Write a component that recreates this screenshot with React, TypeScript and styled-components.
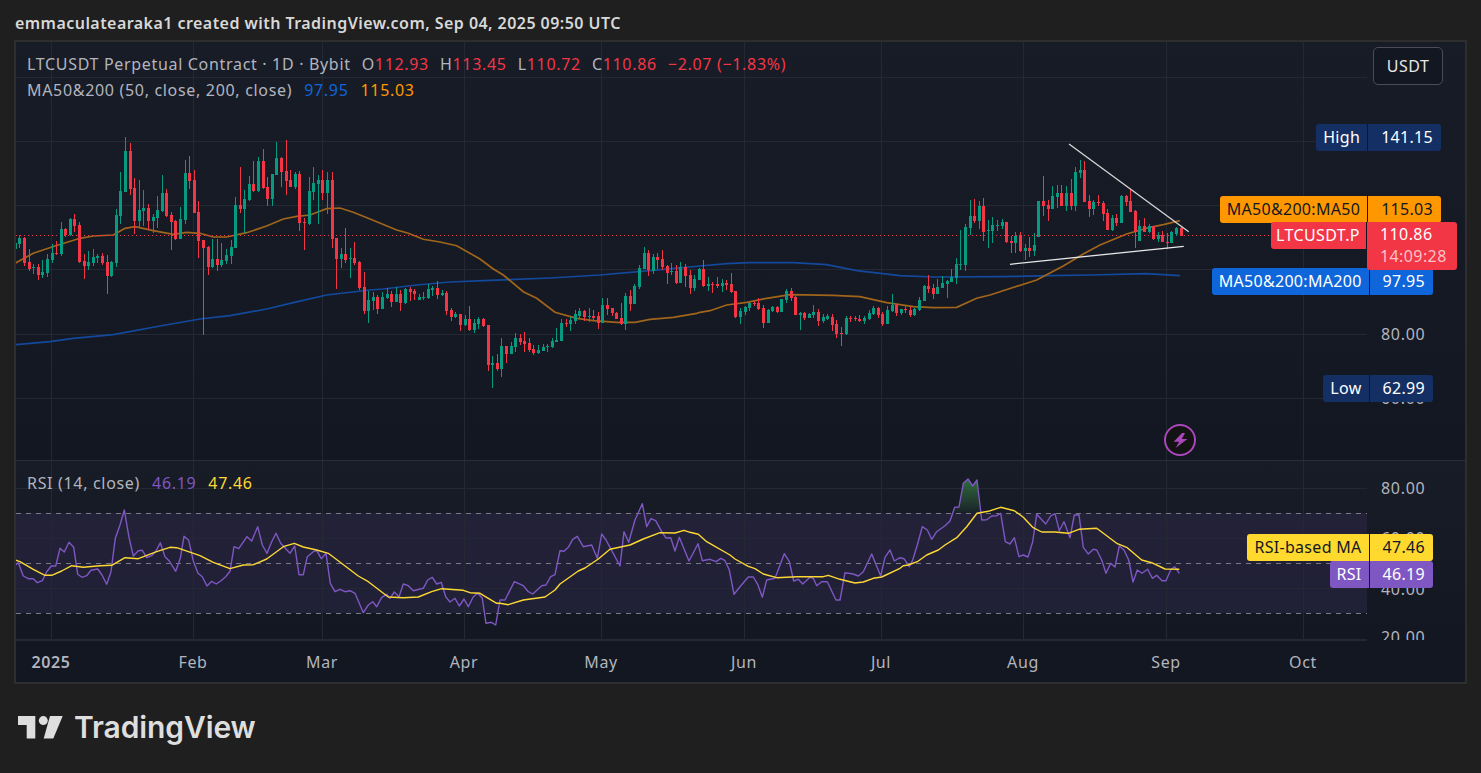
import React from 'react';
import styled, { createGlobalStyle } from 'styled-components';

const FONT = '"Noto Sans", "Open Sans", sans-serif';
const UP = '#089981';
const DOWN = '#f23645';
const GRID = '#242833';

const GlobalStyle = createGlobalStyle`
  html, body {
    margin: 0;
    background: #1f1f1f;
    font-family: ${FONT};
  }
`;

const Page = styled.div`
  width: 1481px;
  height: 773px;
  padding: 0 14px;
  box-sizing: border-box;
  overflow: hidden;
`;

const Title = styled.div`
  height: 40px;
  padding: 6px 0 0 1px;
  box-sizing: border-box;
  font-size: 16px;
  line-height: 34px;
  font-weight: 600;
  letter-spacing: 0.45px;
  color: #d8d8d8;
  white-space: nowrap;
`;

const Frame = styled.div`
  width: 1453px;
  height: 644px;
  box-sizing: border-box;
  border: 2px solid #2e2e2e;
  background: #131722;
  display: flex;
  flex-direction: column;
`;

const Pane = styled.div<{ $height: number }>`
  height: ${(p) => p.$height}px;
  display: flex;
  background: linear-gradient(#181c27, #131722);
  flex: none;
`;

const Separator = styled.div`
  height: 1px;
  background: #2a2e39;
  flex: none;
`;

const Plot = styled.div`
  position: relative;
  width: 1351px;
  height: 100%;
  flex: none;
  svg {
    display: block;
  }
`;

const Axis = styled.div`
  position: relative;
  flex: 1;
  height: 100%;
`;

const Legend = styled.div`
  position: absolute;
  left: 11px;
  top: 9px;
  display: flex;
  flex-direction: column;
  font-size: 16px;
  line-height: 26px;
  letter-spacing: 0.68px;
  color: #b2b5be;
  white-space: nowrap;
`;

const LegendRow = styled.div<{ $gap: number }>`
  display: flex;
  gap: ${(p) => p.$gap}px;
`;

const Ohlc = styled.span`
  color: ${DOWN};
  b {
    font-weight: 400;
    color: #b2b5be;
  }
`;

const LegendValue = styled.span<{ $color: string }>`
  color: ${(p) => p.$color};
`;

const CurrencyButton = styled.div`
  margin: 5px 0 0 6px;
  width: 70px;
  height: 38px;
  box-sizing: border-box;
  border: 1px solid #4a4d57;
  border-radius: 5px;
  background: #131722;
  color: #e6e6e6;
  font-size: 16px;
  letter-spacing: 0.5px;
  line-height: 36px;
  text-align: center;
`;

const Tick = styled.div<{ $y: number }>`
  position: absolute;
  left: 14px;
  top: ${(p) => p.$y}px;
  transform: translateY(-50%);
  font-size: 16px;
  letter-spacing: 0.7px;
  line-height: 20px;
  color: #b2b5be;
`;

const TickClip = styled.div`
  position: absolute;
  inset: 0;
  overflow: hidden;
`;

const Tag = styled.div<{ $top: number; $right: number; $bg: string; $fg: string }>`
  position: absolute;
  top: ${(p) => p.$top}px;
  right: ${(p) => p.$right}px;
  height: 27px;
  display: flex;
  font-size: 16px;
  letter-spacing: 0.3px;
  line-height: 26px;
  white-space: nowrap;
  color: ${(p) => p.$fg};
  background: ${(p) => p.$bg};
  border-radius: 3px;
  z-index: 1;
`;

const TagName = styled.div`
  padding: 0 7px;
  border-right: 1px solid #131722;
`;

const TagValue = styled.div`
  padding: 0 8px 0 13px;
`;

const PriceTag = styled.div`
  position: absolute;
  top: 180px;
  left: -96px;
  display: flex;
  align-items: flex-start;
  font-size: 16px;
  letter-spacing: 0.4px;
  line-height: 26px;
  color: #fff;
  white-space: nowrap;
  z-index: 2;
`;

const PriceName = styled.div`
  width: 96px;
  height: 27px;
  box-sizing: border-box;
  padding-left: 5px;
  background: ${DOWN};
  border-radius: 3px 0 0 3px;
  border-right: 1px solid #131722;
`;

const PriceValue = styled.div`
  width: 90px;
  height: 48px;
  box-sizing: border-box;
  padding-left: 13px;
  background: ${DOWN};
  border-radius: 0 3px 3px 3px;
  line-height: 24px;
  span {
    display: block;
    line-height: 21px;
    color: #fbc2c7;
  }
`;

const Badge = styled.div`
  position: absolute;
  left: 1148px;
  top: 382px;
  width: 32px;
  height: 32px;
  box-sizing: border-box;
  border: 2px solid #ab47bc;
  border-radius: 50%;
  background: #131313;
  display: flex;
  align-items: center;
  justify-content: center;
`;

const TimeAxis = styled.div`
  position: relative;
  flex: 1;
`;

const TimeLine = styled.div`
  width: 1351px;
  height: 1px;
  background: ${GRID};
`;

const TimeTick = styled.div<{ $x: number; $strong?: boolean }>`
  position: absolute;
  left: ${(p) => p.$x - 16}px;
  top: 12px;
  transform: translateX(-50%);
  font-size: 16px;
  letter-spacing: 0.6px;
  line-height: 20px;
  font-weight: ${(p) => (p.$strong ? 600 : 400)};
  color: #b2b5be;
`;

const Footer = styled.div`
  display: flex;
  align-items: center;
  gap: 11px;
  padding: 25px 0 0 4px;
  color: #dedede;
`;

const Wordmark = styled.div`
  font-family: Inter, ${FONT};
  font-size: 30px;
  line-height: 36px;
  font-weight: 600;
  letter-spacing: -0.1px;
`;

type Candle = number[];

// [up, high, bodyTop, bodyBottom, low]; the y values are 3x crop units, y0 is the crop's top
const SEG_A: Candle[] = [
  [1,370,370,386,386],[1,345,353,372,384],[0,350,354,428,437],[0,387,426,446,453],[1,432,441,444,462],[0,432,441,465,480],[1,420,456,465,473],[1,402,417,459,471],[1,372,399,420,430],[0,363,399,403,405],
  [1,306,327,402,408],[0,323,327,345,351],[1,294,297,345,348],[0,282,297,318,336],[0,306,315,426,429],[0,402,423,438,477],[1,393,426,438,450],[1,387,411,429,438],[1,402,408,414,429],[0,399,408,429,435],
  [0,405,426,468,522],[1,423,426,468,471],[1,267,285,429,441],[1,156,213,288,312],[1,51,93,216,216],[0,69,93,207,225],[0,174,204,303,342],[1,180,270,303,321],[1,210,264,273,318],[0,252,264,303,330],
  [1,282,291,303,339],[1,228,270,294,324],[1,165,219,273,276],[0,207,219,288,291],[0,276,285,306,390],[0,300,303,357,360],[1,261,297,357,357],[1,120,159,300,312],[0,108,159,183,207],[0,150,180,279,279],
  [0,243,276,363,414],[0,360,360,384,645],[0,378,381,441,465],[1,357,417,441,444],[0,357,417,435,453],[1,369,420,435,441],[1,387,405,423,432],[1,360,381,408,432],[1,231,255,384,384],[0,141,255,267,279],
  [1,210,237,267,339],[1,168,192,240,243],[0,123,192,213,216],[1,111,123,213,216],[0,87,123,204,207],[0,171,201,237,258],[1,162,162,237,258],[1,66,114,165,165],[0,111,114,156,201],[0,60,153,183,225],
  [0,150,180,201,201],[1,156,162,201,207],[0,153,162,309,333],[0,294,306,309,390],[1,171,213,312,315],[1,141,189,216,240],[1,165,180,192,312],[0,150,180,219,240],[1,156,180,219,282],[0,156,180,357,384],
  [0,354,354,417,507],[1,384,402,417,444],[0,324,402,420,429],[1,384,414,417,474],[0,366,414,429,435],[0,423,426,504,510],[0,456,501,573,582],[1,513,540,573,609],
];

const SEG_B: Candle[] = [
  [1,186,201,213,240],[0,195,201,237,252],[1,186,201,237,237],[1,174,192,204,207],[0,183,192,216,231],[1,171,192,216,216],[0,180,192,219,243],[1,174,177,219,222],[0,171,177,186,213],[0,177,183,192,210],
  [1,192,201,210,210],[1,186,201,204,210],[1,162,177,204,207],[1,168,174,180,198],[0,153,174,195,207],[1,180,189,195,198],[0,183,189,243,255],[0,234,240,261,273],[1,246,252,261,264],[0,252,252,285,303],
  [1,255,267,285,288],[0,228,267,300,303],[1,267,279,300,309],[1,261,267,282,297],[0,264,267,288,291],[0,285,285,405,423],[1,378,399,405,474],[0,372,399,417,423],[1,324,348,417,441],[0,348,348,372,399],
  [1,336,348,372,372],[1,309,324,351,366],[0,312,324,336,345],[0,306,333,342,366],[0,324,339,360,366],[0,345,357,369,375],[1,345,360,369,372],[1,342,351,363,363],[1,342,348,350,366],[1,324,333,351,354],
  [1,294,330,336,336],[1,267,279,333,333],[0,267,279,282,291],[1,261,270,282,303],[1,240,252,273,282],[1,234,243,258,264],[0,240,243,261,273],[1,234,258,261,276],[0,240,258,264,270],[0,246,258,279,297],
  [1,204,225,279,279],[0,204,225,237,255],[0,234,234,249,258],[0,246,249,267,267],[0,219,264,282,285],[1,189,198,282,300],[0,180,198,222,243],[1,162,168,222,222],[1,105,114,171,177],[1,51,69,117,117],
  [0,60,69,120,138],[1,72,81,123,132],[0,69,81,90,117],[0,60,87,111,120],[0,105,108,129,162],[1,99,123,126,135],[0,105,123,159,162],[1,96,111,159,159],[0,102,111,138,171],[0,120,135,174,192],
  [1,135,147,174,183],[1,114,117,150,150],[0,90,117,168,171],[1,141,162,168,183],[0,156,162,164,189],[0,141,162,168,174],
];

const SEG_C: Candle[] = [
  [1,267,279,288,306],[0,270,279,285,300],[0,249,282,306,309],[0,303,303,381,384],[1,354,363,381,402],[1,348,351,366,375],[1,333,339,354,363],[0,333,339,342,348],[0,324,339,357,360],[0,345,354,399,414],
  [1,357,360,399,399],[1,348,351,363,366],[0,348,351,366,369],[1,327,327,366,366],[1,297,303,330,339],[0,294,303,324,333],[0,318,321,375,375],[1,366,369,375,420],[0,366,369,384,390],[1,369,372,384,384],
  [1,345,366,375,384],[0,357,366,393,408],[1,372,381,393,399],[1,372,378,387,390],[0,372,381,405,423],[0,390,402,432,444],[0,411,430,432,468],[1,378,384,432,435],[0,378,384,387,396],[0,378,384,387,393],
  [0,375,387,393,396],[1,378,384,393,402],[1,360,369,387,390],[1,348,354,372,375],[0,351,354,375,384],[0,366,372,402,408],[1,348,360,402,402],[1,312,345,363,366],[0,342,345,369,378],[1,357,357,369,375],
  [0,348,357,360,369],[0,351,360,375,381],[1,354,357,375,378],[1,321,330,360,363],[1,285,288,333,333],[0,255,288,297,309],[0,282,294,312,327],[1,267,291,312,312],[1,258,279,294,294],[1,270,273,282,324],
  [1,237,261,276,276],[1,204,222,264,282],[1,120,222,225,240],[1,102,111,225,243],[1,30,78,114,135],[0,27,78,93,99],[1,33,48,93,117],[0,24,48,126,153],[1,90,120,123,174],[1,81,105,123,159],[1,90,105,108,123],
];

const SEG_D: Candle[] = [
  [1,267,276,288,297],[0,276,276,336,339],[0,318,333,339,369],[1,306,318,339,369],[0,306,315,363,366],[1,342,354,363,390],[0,321,354,363,381],[1,309,345,363,378],[1,213,213,321,321],[0,138,213,228,258],
  [0,210,225,237,273],[1,168,198,237,237],[1,165,189,201,234],[0,165,189,228,228],[1,168,189,228,243],[0,147,189,228,240],[1,111,126,228,243],[1,90,120,129,144],[0,93,120,216,216],[0,195,213,237,261],
  [1,210,216,237,255],[0,195,216,219,228],[0,213,219,252,273],[0,237,249,300,300],[1,255,264,300,303],[0,252,264,279,288],[1,195,198,279,279],[0,195,198,216,228],[0,177,213,246,246],[0,240,243,305,354],
  [1,270,288,333,333],[0,264,288,306,306],[1,282,288,306,308],[0,288,288,327,330],[1,306,315,327,336],[0,303,315,336,336],[0,309,336,336,358],[1,303,306,339,339],[1,291,294,312,318],[0,288,294,318,318],
];

const candles = [
  ...SEG_A.map((c) => ({ c, y0: 120 })),
  ...SEG_B.map((c) => ({ c, y0: 230 })),
  ...SEG_C.map((c) => ({ c, y0: 190 })),
  ...SEG_D.map((c) => ({ c, y0: 130 })),
].map(({ c, y0 }, i) => ({
  x: Math.round(19.4 + 4.59 * (i - 1)),
  up: c[0] === 1,
  high: y0 + c[1] / 3,
  top: y0 + c[2] / 3,
  bottom: y0 + c[3] / 3,
  low: y0 + c[4] / 3,
}));

// joins traced crops into one line, dropping points that overlap the crop before
const trace = (parts: [number, number, number[]][]) => {
  const out: string[] = [];
  let last = -1;
  parts.forEach(([x0, y0, raw]) => {
    for (let i = 0; i < raw.length; i += 2) {
      const x = x0 + raw[i] / 3;
      if (x <= last) continue;
      last = x;
      out.push(`${x.toFixed(1)},${(y0 + raw[i + 1] / 3).toFixed(1)}`);
    }
  });
  return out.join(' ');
};

const MA50 = trace([
  [0, 120, [45,430,100,400,165,378,240,355,280,348,340,345,375,325,405,320,460,332,520,343,560,337,600,340,640,351,680,351,740,338,800,318,850,297,890,289,930,285,980,266,1020,264,1060,277,1110,297]],
  [350, 230, [140,0,175,10,220,28,270,36,320,47,390,87,430,117,460,135,520,185,560,205,615,247,680,265,730,272,800,277,855,277,900,268,970,262,1040,250]],
  [700, 190, [0,367,30,362,80,345,140,337,200,325,270,314,400,316,480,320,560,338,640,350,700,353,770,352,830,325,870,315,900,305]],
  [950, 130, [260,450,340,408,400,372,450,345,530,312,600,292,640,284,690,272]],
]);

const MA200 = trace([
  [0, 120, [45,674,150,665,220,655,340,644,480,618,600,597,690,587,800,567,880,548,980,525,1110,510]],
  [350, 230, [100,177,200,165,300,156,420,151,600,144,750,135,900,122,1050,108]],
  [700, 190, [80,221,150,218,280,218,380,224,470,242,600,257,700,261,900,260]],
  [950, 130, [300,437,420,435,590,431,690,437]],
]);

const RSI = trace([
  [0, 460, [45,316,55,308,70,348,85,356,100,356,112,368,127,362,140,335,154,318,167,318,180,265,193,276,207,247,221,262,233,343,246,352,260,347,273,331,293,327,306,345,320,373,333,335,346,235,360,195,373,150,387,232,400,288,415,272,427,271,440,293,455,287,468,273,481,248,495,290,508,303,527,334,541,295,552,229,566,241,580,303,594,340,607,350,621,378,635,364,649,372,663,362,677,350,690,334,702,260,716,266,741,230,755,243,773,200,787,255,801,280,815,245,828,220,842,250,856,265,870,280,884,258,897,344,910,344,922,290,940,275,950,272,964,296,978,280,991,370,1005,395,1020,388,1035,395,1050,392,1065,400,1090,458,1105,435,1118,425,1130,440,1145,412,1160,403,1170,415,1183,396,1197,410,1210,372,1225,377,1240,392,1270,385,1283,360,1297,352,1310,372,1324,367,1337,410,1350,426,1365,415,1378,438,1392,417,1405,440,1420,410,1433,400,1447,415,1458,490,1474,487,1487,495,1500,420]],
  [500, 470, [15,390,43,335,70,347,85,365,98,372,125,347,138,345,152,320,165,314,180,242,192,244,205,232,218,208,232,199,250,230,275,225,292,265,305,192,318,210,330,232,360,288,372,185,386,217,405,150,427,101,440,170,453,146,467,152,485,185,498,204,512,203,525,243,538,202,567,273,594,221,607,272,630,268,648,275,663,265,675,272,688,300,702,373,720,350,745,321,760,321,773,343,787,382,800,330,825,325,853,251,868,275,881,333,895,328,908,342,930,322,940,325,950,347,965,335,982,335,1008,390,1020,390,1035,308,1060,312,1075,318,1090,305,1115,252,1142,318,1155,262,1170,240,1183,273,1200,263]],
  [880, 470, [72,266,88,290,98,270,112,225,127,170,142,180,155,208,170,185,195,167,210,153,224,112,237,111,250,40,264,27,278,48,291,30,305,150,320,149,335,138,350,137,362,130,376,215,390,222,403,203,417,260,430,255,444,261,458,215,470,133,497,162,512,138,525,131,538,182,552,155,570,203,583,135,597,134,610,232,625,252,640,238,650,240,665,270,678,310,692,280,705,291,718,228,732,240,746,270,759,336,772,300,786,310,803,298,817,325,830,316,846,332,858,332,873,298,884,290,898,310]],
]);

const RSI_MA = trace([
  [0, 460, [45,300,60,305,100,328,135,346,155,346,185,333,215,317,250,322,300,317,335,316,375,293,415,296,470,275,510,262,530,263,600,287,640,307,690,326,730,315,760,314,800,297,850,260,883,250,910,261,950,270,985,280,1075,348,1105,365,1165,411,1210,413,1255,411,1295,395,1325,386,1390,391,1410,398,1440,400,1490,430,1500,430]],
  [500, 470, [25,404,70,390,135,381,165,360,180,342,235,303,255,294,295,267,330,238,390,225,430,207,480,188,525,189,552,181,570,187,595,193,620,215,690,255,705,267,745,289,765,296,790,312,830,323,890,320,970,320,985,316,1020,328,1065,339,1090,336,1120,325,1145,321,1200,295]],
  [880, 470, [70,287,85,285,112,275,140,255,175,240,195,225,230,203,260,170,291,130,325,124,362,112,403,122,430,142,458,172,485,186,525,186,565,190,597,178,650,175,680,197,710,220,740,232,785,270,815,278,855,297,898,298]],
]);

const OVERBOUGHT = trace([[880, 470, [219,128,224,112,237,111,250,40,264,27,278,48,291,30,299,128]]]);

const MONTHS = [
  { label: '2025', x: 51, strong: true },
  { label: 'Feb', x: 193 },
  { label: 'Mar', x: 322 },
  { label: 'Apr', x: 464 },
  { label: 'May', x: 601 },
  { label: 'Jun', x: 744 },
  { label: 'Jul', x: 881 },
  { label: 'Aug', x: 1023 },
  { label: 'Sep', x: 1166 },
  { label: 'Oct', x: 1303 },
];

const VerticalGrid = ({ y1, y2 }: { y1: number; y2: number }) => (
  <>
    {MONTHS.map((m) => (
      <line key={m.label} x1={m.x + 0.5} x2={m.x + 0.5} y1={y1} y2={y2} stroke={GRID} />
    ))}
  </>
);

const HorizontalGrid = ({ ys }: { ys: number[] }) => (
  <>
    {ys.map((y) => (
      <line key={y} x1={16} x2={1367} y1={y + 0.5} y2={y + 0.5} stroke={GRID} />
    ))}
  </>
);

const PricePlot = () => (
  <svg width={1351} height={418} viewBox="16 42 1351 418">
    <HorizontalGrid ys={[77, 141, 205, 269, 334, 398]} />
    <VerticalGrid y1={42} y2={460} />
    <polyline points={MA200} fill="none" stroke="#13499c" strokeWidth={1.7} />
    <polyline points={MA50} fill="none" stroke="#a0651a" strokeWidth={1.7} />
    <line x1={16} x2={1367} y1={235.5} y2={235.5} stroke={DOWN} strokeDasharray="1 3" />
    {candles.map((d, i) => (
      <g key={i} fill={d.up ? UP : DOWN} shapeRendering="crispEdges">
        <rect x={d.x} y={d.high} width={1} height={d.low - d.high} />
        <rect x={d.x - 1} y={d.top} width={3} height={Math.max(d.bottom - d.top, 1)} />
      </g>
    ))}
    <line x1={1069} y1={144} x2={1188.7} y2={231.7} stroke="#d6d6d6" strokeWidth={1.3} />
    <line x1={1010} y1={264.3} x2={1183.7} y2={246.3} stroke="#e8e8e8" strokeWidth={1.3} />
  </svg>
);

const RsiPlot = () => (
  <svg width={1351} height={179} viewBox="16 461 1351 179">
    <defs>
      <linearGradient id="overbought" x1="0" y1="0" x2="0" y2="1">
        <stop offset="0" stopColor="#2f6b3e" />
        <stop offset="1" stopColor="#2f6b3e" stopOpacity="0.1" />
      </linearGradient>
    </defs>
    <rect x={16} y={513} width={1351} height={100} fill="#7e57c2" fillOpacity={0.12} />
    <HorizontalGrid ys={[488, 538, 588, 639]} />
    <VerticalGrid y1={461} y2={640} />
    {[513, 563, 613].map((y) => (
      <line key={y} x1={16} x2={1367} y1={y + 0.5} y2={y + 0.5} stroke="#787b86" strokeDasharray="5 5" />
    ))}
    <polygon points={OVERBOUGHT} fill="url(#overbought)" />
    <polyline points={RSI} fill="none" stroke="#7e57c2" strokeWidth={1.4} strokeLinejoin="round" />
    <polyline points={RSI_MA} fill="none" stroke="#fdd835" strokeWidth={1.4} strokeLinejoin="round" />
  </svg>
);

const Logo = () => (
  <svg width={45} height={23} viewBox="0 0 45 23" fill="currentColor">
    <path d="M0 0H17.3V22.4H8.7V9H0Z" />
    <circle cx={25.3} cy={4.6} r={4.5} />
    <path d="M32 0H44.7L35.3 22.4H25.7Z" />
  </svg>
);

const App = () => (
  <Page>
    <GlobalStyle />
    <Title>emmaculatearaka1 created with TradingView.com, Sep 04, 2025 09:50 UTC</Title>
    <Frame>
      <Pane $height={418}>
        <Plot>
          <PricePlot />
          <Legend>
            <LegendRow $gap={11}>
              <span>LTCUSDT Perpetual Contract · 1D · Bybit</span>
              <Ohlc><b>O</b>112.93</Ohlc>
              <Ohlc><b>H</b>113.45</Ohlc>
              <Ohlc><b>L</b>110.72</Ohlc>
              <Ohlc><b>C</b>110.86</Ohlc>
              <Ohlc>−2.07 (−1.83%)</Ohlc>
            </LegendRow>
            <LegendRow $gap={12}>
              <span>MA50&amp;200 (50, close, 200, close)</span>
              <LegendValue $color="#0e66da">97.95</LegendValue>
              <LegendValue $color="#ff9800">115.03</LegendValue>
            </LegendRow>
          </Legend>
          <Badge>
            <svg width={17} height={17} viewBox="0 0 16 16" fill="#ab47bc">
              <path d="M9.5 1 1.5 9.2H6.8L3.4 15 14.5 6.6H9.2L12.2 1Z" />
            </svg>
          </Badge>
        </Plot>
        <Axis>
          <CurrencyButton>USDT</CurrencyButton>
          <Tick $y={292}>80.00</Tick>
          <Tick $y={356}>60.00</Tick>
          <Tag $top={82} $right={24} $bg="#132f63" $fg="#fff">
            <TagName>High</TagName>
            <TagValue>141.15</TagValue>
          </Tag>
          <Tag $top={154} $right={24} $bg="#ff9800" $fg="#131722">
            <TagName>MA50&amp;200:MA50</TagName>
            <TagValue>115.03</TagValue>
          </Tag>
          <PriceTag>
            <PriceName>LTCUSDT.P</PriceName>
            <PriceValue>
              110.86
              <span>14:09:28</span>
            </PriceValue>
          </PriceTag>
          <Tag $top={226} $right={32} $bg="#0e66da" $fg="#fff">
            <TagName>MA50&amp;200:MA200</TagName>
            <TagValue>97.95</TagValue>
          </Tag>
          <Tag $top={333} $right={32} $bg="#132f63" $fg="#fff">
            <TagName>Low</TagName>
            <TagValue>62.99</TagValue>
          </Tag>
        </Axis>
      </Pane>
      <Separator />
      <Pane $height={179}>
        <Plot>
          <RsiPlot />
          <Legend>
            <LegendRow $gap={12}>
              <span>RSI (14, close)</span>
              <LegendValue $color="#7e57c2">46.19</LegendValue>
              <LegendValue $color="#fdd835">47.46</LegendValue>
            </LegendRow>
          </Legend>
        </Plot>
        <Axis>
          <TickClip>
            <Tick $y={27}>80.00</Tick>
            <Tick $y={77}>60.00</Tick>
            <Tick $y={128}>40.00</Tick>
            <Tick $y={176}>20.00</Tick>
          </TickClip>
          <Tag $top={73} $right={32} $bg="#ffd92e" $fg="#131722">
            <TagName>RSI-based MA</TagName>
            <TagValue>47.46</TagValue>
          </Tag>
          <Tag $top={100} $right={32} $bg="#7e57c2" $fg="#fff">
            <TagName>RSI</TagName>
            <TagValue>46.19</TagValue>
          </Tag>
        </Axis>
      </Pane>
      <TimeAxis>
        <TimeLine />
        {MONTHS.map((m) => (
          <TimeTick key={m.label} $x={m.x} $strong={m.strong}>{m.label}</TimeTick>
        ))}
      </TimeAxis>
    </Frame>
    <Footer>
      <Logo />
      <Wordmark>TradingView</Wordmark>
    </Footer>
  </Page>
);

export default App;
